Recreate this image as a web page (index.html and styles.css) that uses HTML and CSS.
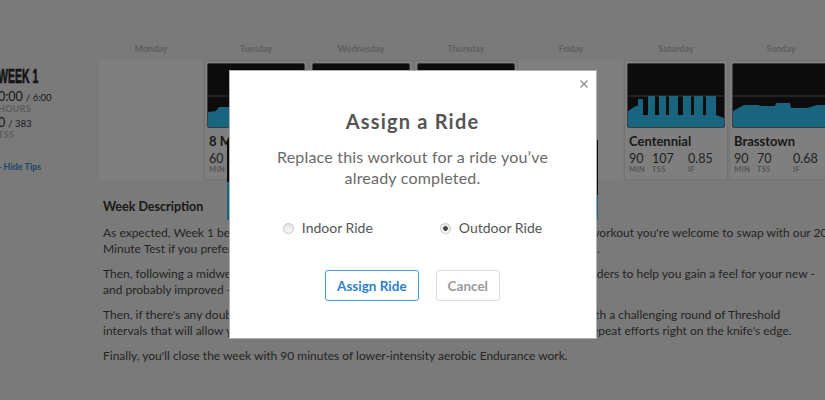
FILE: index.html
```html
<!DOCTYPE html>
<html lang="en">
<head>
<meta charset="UTF-8">
<meta name="viewport" content="width=device-width, initial-scale=1.0">
<title>Training Plan - Week 1</title>
<link rel="stylesheet" href="styles.css">
</head>
<body>
<div class="plan">
    <div class="week">
        <div class="week-summary">
            <h2 class="week-title">WEEK 1</h2>
            <div class="summary-stat"><span class="summary-value">0:00</span> <span class="summary-total">/ 6:00</span></div>
            <div class="summary-label">HOURS</div>
            <div class="summary-stat"><span class="summary-value">0</span> <span class="summary-total">/ 383</span></div>
            <div class="summary-label">TSS</div>
            <a class="tips-toggle" href="#">- Hide Tips</a>
        </div>

        <div class="day-name">Monday</div>
        <div class="day-name">Tuesday</div>
        <div class="day-name">Wednesday</div>
        <div class="day-name">Thursday</div>
        <div class="day-name">Friday</div>
        <div class="day-name">Saturday</div>
        <div class="day-name">Sunday</div>

        <div class="rest-day"></div>
        <div class="workout">
            <div class="chart">
                <svg viewBox="0 0 96 63" preserveAspectRatio="none">
                    <line class="ftp" x1="0" y1="32" x2="96" y2="32"/>
                    <polygon class="profile" points="0,63 0,48 8,47 11,43 40,43 41,20 60,20 61,43 96,43 96,63"/>
                </svg>
            </div>
            <div class="workout-name">8 Minute Test</div>
            <div class="workout-stats">
                <div><span class="stat-value">60</span><span class="stat-label">MIN</span></div>
                <div><span class="stat-value">72</span><span class="stat-label">TSS</span></div>
                <div><span class="stat-value">0.85</span><span class="stat-label">IF</span></div>
            </div>
        </div>
        <div class="workout">
            <div class="chart">
                <svg viewBox="0 0 96 63" preserveAspectRatio="none">
                    <line class="ftp" x1="0" y1="32" x2="96" y2="32"/>
                    <polygon class="profile" points="0,63 0,50 20,46 96,46 96,63"/>
                </svg>
            </div>
            <div class="workout-name">Lane</div>
            <div class="workout-stats">
                <div><span class="stat-value">45</span><span class="stat-label">MIN</span></div>
                <div><span class="stat-value">25</span><span class="stat-label">TSS</span></div>
                <div><span class="stat-value">0.58</span><span class="stat-label">IF</span></div>
            </div>
        </div>
        <div class="workout">
            <div class="chart">
                <svg viewBox="0 0 96 63" preserveAspectRatio="none">
                    <line class="ftp" x1="0" y1="32" x2="96" y2="32"/>
                    <polygon class="profile" points="0,63 0,48 10,44 20,38 30,34 40,44 50,36 60,33 70,44 96,46 96,63"/>
                </svg>
            </div>
            <div class="workout-name">Baxter</div>
            <div class="workout-stats">
                <div><span class="stat-value">60</span><span class="stat-label">MIN</span></div>
                <div><span class="stat-value">65</span><span class="stat-label">TSS</span></div>
                <div><span class="stat-value">0.81</span><span class="stat-label">IF</span></div>
            </div>
        </div>
        <div class="rest-day"></div>
        <div class="workout">
            <div class="chart">
                <svg viewBox="0 0 96 63" preserveAspectRatio="none">
                    <line class="ftp" x1="0" y1="32" x2="96" y2="32"/>
                    <polygon class="profile" points="0,63 0,47 8,42 10,42 10,35 15,35 15,51 20,51 20,32 27,32 27,51 31,51 31,32 38,32 38,51 41,51 41,32 50,32 50,51 55,51 55,32 63,32 63,51 66,51 66,32 75,32 75,51 78,51 78,32 88,32 88,51 96,54 96,63"/>
                </svg>
            </div>
            <div class="workout-name">Centennial</div>
            <div class="workout-stats">
                <div><span class="stat-value">90</span><span class="stat-label">MIN</span></div>
                <div><span class="stat-value">107</span><span class="stat-label">TSS</span></div>
                <div><span class="stat-value">0.85</span><span class="stat-label">IF</span></div>
            </div>
        </div>
        <div class="workout">
            <div class="chart">
                <svg viewBox="0 0 96 63" preserveAspectRatio="none">
                    <line class="ftp" x1="0" y1="32" x2="96" y2="32"/>
                    <polygon class="profile" points="0,63 0,47 11,41 26,41 27,42 42,42 43,39 57,39 58,44 74,44 84,41 96,41 96,63"/>
                </svg>
            </div>
            <div class="workout-name">Brasstown</div>
            <div class="workout-stats">
                <div><span class="stat-value">90</span><span class="stat-label">MIN</span></div>
                <div><span class="stat-value">70</span><span class="stat-label">TSS</span></div>
                <div><span class="stat-value">0.68</span><span class="stat-label">IF</span></div>
            </div>
        </div>

        <div class="week-notes">
            <h3>Week Description</h3>
            <p>As expected, Week 1 begins with a Ramp Test, though if you'd rather take longer assessment workout you're welcome to swap with our 20<br>Minute Test if you prefer that format for gauging your FTP and establishing your training zones.</p>
            <p>Then, following a midweek recovery day, you'll spin through a short set of key Over-Under Ladders to help you gain a feel for your new -<br>and probably improved - threshold power ahead of the weekend.</p>
            <p>Then, if there's any doubt about where your new numbers stand, you'll put them to the test with a challenging round of Threshold<br>intervals that will allow you to experience what your new threshold feels like as you ride and repeat efforts right on the knife's edge.</p>
            <p>Finally, you'll close the week with 90 minutes of lower-intensity aerobic Endurance work.</p>
        </div>
    </div>
</div>

<div class="workout-preview">
    <svg viewBox="0 0 371 80" preserveAspectRatio="none">
        <polygon class="profile" points="0,80 0,42 120,40 250,50 371,55 371,80"/>
    </svg>
</div>

<div class="backdrop"></div>

<div class="modal">
    <button class="modal-close" type="button">
        <svg viewBox="0 0 8 8"><path d="M0.5 0.5 L7.5 7.5 M7.5 0.5 L0.5 7.5"/></svg>
    </button>
    <h2 class="modal-title">Assign a Ride</h2>
    <p class="modal-text">Replace this workout for a ride you&rsquo;ve already completed.</p>
    <div class="ride-type">
        <label><input type="radio" name="ride"> Indoor Ride</label>
        <label><input type="radio" name="ride" checked> Outdoor Ride</label>
    </div>
    <div class="modal-actions">
        <button class="btn btn-primary" type="button">Assign Ride</button>
        <button class="btn btn-cancel" type="button">Cancel</button>
    </div>
</div>
</body>
</html>
```

FILE: styles.css
```css
* {
    box-sizing: border-box;
}
html, body {
    margin: 0;
    height: 100%;
}
body {
    background: #f4f4f4;
    font-family: Lato, "Open Sans", sans-serif;
    color: #4a4a4a;
    overflow: hidden;
}

.plan {
    padding-top: 40px;
}
.week {
    display: grid;
    grid-template-columns: 100px repeat(7, 104px);
    column-gap: 1px;
    margin-left: -2px;
}

/* left summary column */
.week-summary {
    grid-row: 1 / span 2;
    padding-top: 24px;
}
.week-title {
    margin: 0;
    font-family: "Liberation Sans Narrow", "Liberation Sans", sans-serif;
    font-size: 21px;
    line-height: 24px;
    font-weight: 700;
    color: #2a2a2a;
    -webkit-text-stroke: 0.7px #2a2a2a;
    transform: scaleX(0.5);
    transform-origin: left;
    white-space: nowrap;
}
.summary-stat {
    margin-top: 3px;
    font-size: 12px;
    line-height: 12px;
    color: #333;
}
.summary-value {
    font-size: 12.5px;
}
.summary-total {
    font-size: 9.5px;
}
.summary-label {
    font-size: 9px;
    line-height: 10px;
    font-weight: 700;
    color: #b8b8b8;
    letter-spacing: 0.3px;
}
.summary-label + .summary-stat {
    margin-top: 3px;
}
.tips-toggle {
    display: block;
    margin-top: 21px;
    font-size: 9px;
    line-height: 12px;
    font-weight: 700;
    color: #3a8fd6;
    text-decoration: none;
}

/* day columns */
.day-name {
    height: 20px;
    line-height: 18px;
    font-size: 9px;
    font-weight: 700;
    color: #bdbdbd;
    text-align: center;
}
.rest-day {
    height: 120px;
    background: #fff;
}
.workout {
    height: 120px;
    background: #fff;
    border: 1px solid #e6e6e6;
    padding: 2px;
}
.chart {
    height: 65px;
    background: #181818;
    border: 1px solid #7a7a7a;
    border-radius: 2px;
    overflow: hidden;
}
.chart svg, .workout-preview svg {
    display: block;
    width: 100%;
    height: 100%;
}
.ftp {
    stroke: #777;
    stroke-width: 1;
}
.profile {
    fill: #33c8ff;
}
.workout-name {
    margin-top: 5px;
    padding-left: 2px;
    font-size: 13px;
    line-height: 16px;
    font-weight: 700;
    color: #333;
    white-space: nowrap;
}
.workout-stats {
    display: grid;
    grid-template-columns: 23px 36px auto;
    margin-top: 3px;
    padding-left: 2px;
}
.stat-value {
    display: block;
    font-size: 12.5px;
    line-height: 14px;
    color: #444;
}
.stat-label {
    display: block;
    font-size: 7.5px;
    line-height: 8px;
    font-weight: 700;
    color: #aaa;
    letter-spacing: 0.3px;
}

/* description */
.week-notes {
    grid-column: 2 / -1;
    padding: 19px 0 0 4px;
    white-space: nowrap;
}
.week-notes h3 {
    margin: 0 0 10px;
    font-size: 12.5px;
    line-height: 16px;
    color: #333;
}
.week-notes p {
    margin: 0 0 9px;
    font-size: 12px;
    line-height: 16px;
    color: #4a4a4a;
}

/* things lying over the page */
.workout-preview {
    position: absolute;
    left: 227px;
    top: 140px;
    width: 371px;
    height: 80px;
    background: #181818;
}
.backdrop {
    position: fixed;
    inset: 0;
    background: rgba(0, 0, 0, 0.5);
}

.modal {
    position: fixed;
    top: 70px;
    left: calc(50% - 184px);
    width: 368px;
    height: 269px;
    padding: 38px 20px 0;
    background: #fff;
    border: 1px solid #b0b0b0;
    text-align: center;
}
.modal-close {
    position: absolute;
    top: 9px;
    right: 8px;
    width: 8px;
    height: 8px;
    padding: 0;
    border: 0;
    background: none;
    cursor: pointer;
}
.modal-close svg {
    display: block;
    width: 8px;
    height: 8px;
    stroke: #8a8a8a;
    stroke-width: 1.4;
}
.modal-title {
    margin: 0;
    font-size: 20px;
    line-height: 24px;
    font-weight: 700;
    letter-spacing: 1.2px;
    color: #555;
}
.modal-text {
    margin: 13px auto 0;
    width: 300px;
    font-size: 16px;
    line-height: 21px;
    letter-spacing: 0.2px;
    color: #6a6a6a;
}
.ride-type {
    display: flex;
    justify-content: center;
    gap: 67px;
    margin-top: 30px;
    font-size: 14px;
    line-height: 20px;
    color: #555;
}
.ride-type label {
    display: flex;
    align-items: center;
    gap: 8px;
}
.ride-type input {
    appearance: none;
    margin: 0;
    width: 11px;
    height: 11px;
    border: 1px solid #c4c4c4;
    border-radius: 50%;
    background: linear-gradient(#e4e4e4, #f8f8f8);
}
.ride-type input:checked {
    background: radial-gradient(circle, #444 0 2px, transparent 2.6px), linear-gradient(#e4e4e4, #f8f8f8);
}
.modal-actions {
    display: flex;
    justify-content: center;
    gap: 17px;
    margin-top: 32px;
}
.btn {
    height: 31px;
    padding: 0 11px;
    font-family: inherit;
    font-size: 13.5px;
    font-weight: 700;
    background: #fff;
    border-radius: 3px;
    cursor: pointer;
}
.btn-primary {
    border: 1px solid #4a93d4;
    color: #2d7fc9;
}
.btn-cancel {
    border: 1px solid #dcdcdc;
    color: #9a9a9a;
}
```
